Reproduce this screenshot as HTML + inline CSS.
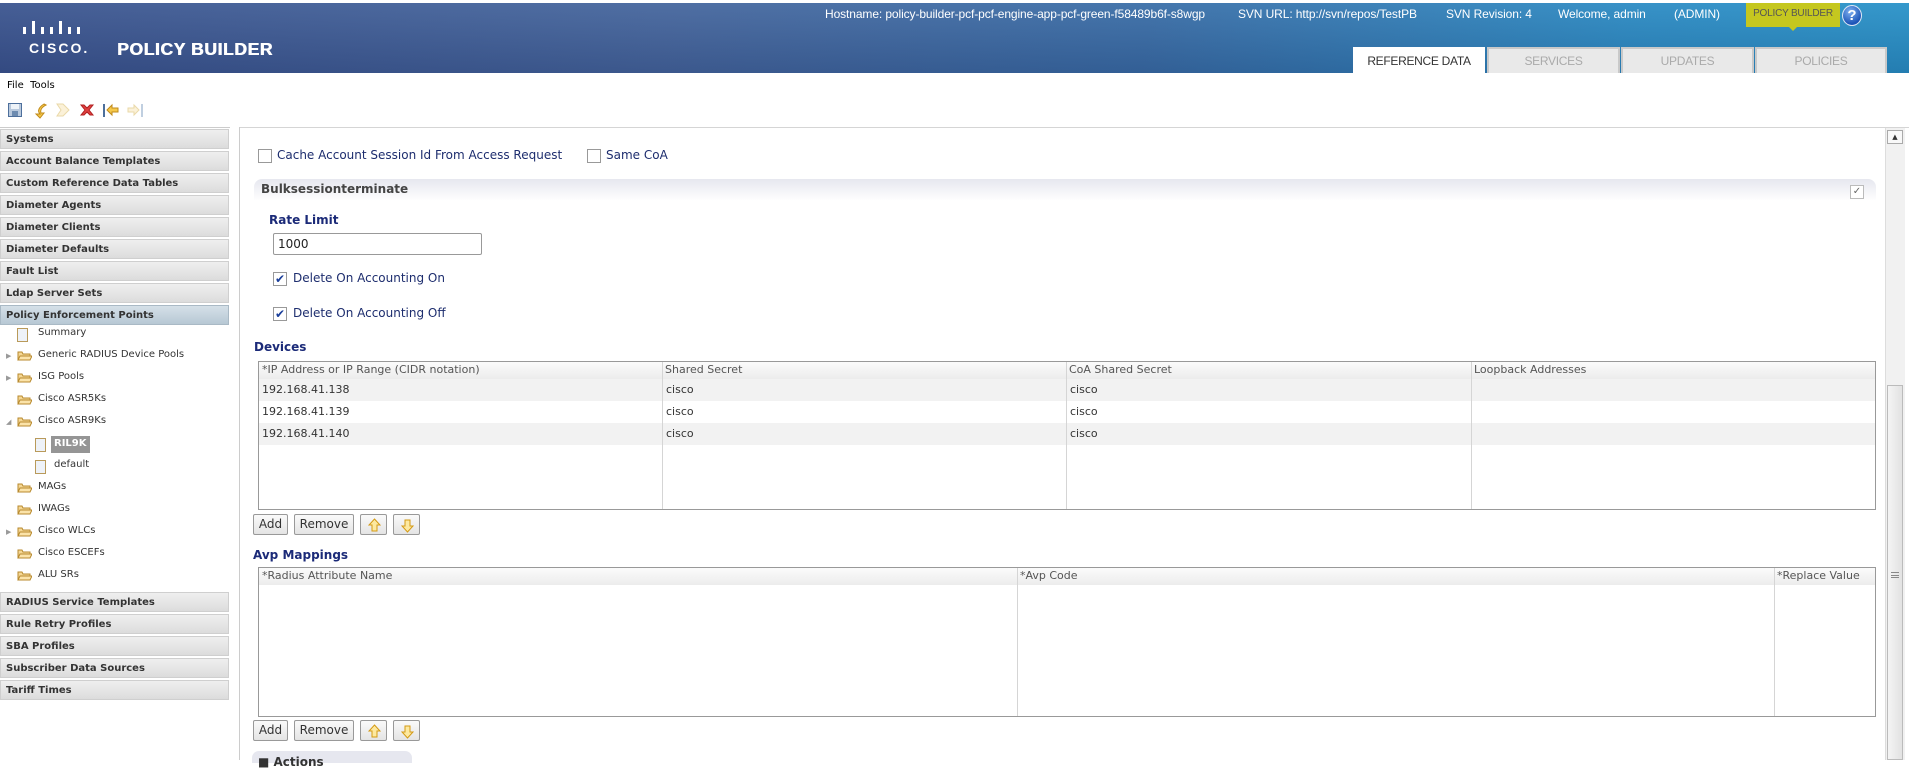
<!DOCTYPE html>
<html><head><meta charset="utf-8">
<style>
*{margin:0;padding:0;box-sizing:border-box}
body{width:1909px;height:760px;overflow:hidden;background:#fff;position:relative;font-family:"DejaVu Sans","Liberation Sans",sans-serif;}
.a{position:absolute;white-space:nowrap}
#hdr{position:absolute;left:0;top:3px;width:1909px;height:70px;background:linear-gradient(100deg,#3c5690 0%,#46679e 35%,#3b6fa8 60%,#2d8cc4 85%,#2a93c9 100%);}
#hdr2{position:absolute;left:0;top:3px;width:1909px;height:70px;background:linear-gradient(180deg,rgba(255,255,255,0.05),rgba(0,0,40,0.15));}
.ht{font-family:"Liberation Sans",sans-serif;font-size:12px;color:#fff;top:7px;letter-spacing:-0.1px}
.tab{position:absolute;top:47px;height:26px;background:#e9e9e9;border:2px solid #c9c9c9;border-bottom:none;font-family:"Liberation Sans",sans-serif;font-size:12px;color:#aaa;text-align:center;line-height:24px;letter-spacing:-0.3px}
.sb{position:absolute;left:0;width:229px;height:20px;background:linear-gradient(#efefef,#dcdcdc);border:1px solid #cfcfcf;font-weight:bold;font-size:10px;color:#333;padding-left:5px;line-height:19px}
.tr{position:absolute;font-size:10px;color:#333;line-height:14px}
.fold{position:absolute;width:15px;height:11px}
.doc{position:absolute;width:11px;height:14px;border:1px solid #b99a5a;background:#eef2f8}
.lbl{font-size:12px;color:#1d2d6e}
.cb{position:absolute;width:14px;height:14px;border:1px solid #999;background:#fff}
.h{font-weight:bold;font-size:12px;color:#1b2a78}
.btn{position:absolute;height:21px;border:1px solid #999;border-radius:2px;background:linear-gradient(#fafafa,#e4e4e4);font-size:12px;color:#333;text-align:center;line-height:19px}
.td{font-size:11px;color:#333}
.ar{position:absolute;left:7px;top:3px}
</style></head><body>
<div id="hdr"></div><div id="hdr2"></div>
<svg class="a" style="left:22px;top:18px" width="76" height="18">
<g fill="#fff">
<rect x="1" y="9" width="3" height="7"/><rect x="10" y="3" width="3" height="13"/><rect x="19" y="9" width="3" height="7"/><rect x="28" y="9" width="3" height="7"/><rect x="37" y="3" width="3" height="13"/><rect x="46" y="9" width="3" height="7"/><rect x="55" y="9" width="3" height="7"/>
</g></svg>
<div class="a" style="left:29px;top:40px;font-family:'Liberation Sans';font-weight:bold;font-size:14px;color:#fff;letter-spacing:2px">CISCO.</div>
<div class="a" style="left:117px;top:39px;font-family:'Liberation Sans';font-weight:bold;font-size:17.5px;color:#fff;letter-spacing:0.6px;text-shadow:0.6px 0 0 #fff">POLICY BUILDER</div>
<div class="a ht" style="left:825px">Hostname: policy-builder-pcf-pcf-engine-app-pcf-green-f58489b6f-s8wgp</div>
<div class="a ht" style="left:1238px">SVN URL: http://svn/repos/TestPB</div>
<div class="a ht" style="left:1446px">SVN Revision: 4</div>
<div class="a ht" style="left:1558px">Welcome, admin</div>
<div class="a ht" style="left:1674px">(ADMIN)</div>
<div class="a" style="left:1746px;top:3px;width:94px;height:24px;background:#c5c71f;font-family:'Liberation Sans';font-size:10px;color:#555;text-align:center;line-height:22px;letter-spacing:-0.2px">POLICY BUILDER</div>
<div class="a" style="left:1789px;top:27px;width:0;height:0;border-left:4px solid transparent;border-right:4px solid transparent;border-top:4px solid #c5c71f"></div>
<div class="a" style="left:1842px;top:5px;width:20px;height:21px;border-radius:50%;background:radial-gradient(circle at 40% 30%,#7fb0f0,#1d55b8 70%);border:1px solid #dfe8f5;color:#fff;font-family:'Liberation Sans';font-weight:bold;font-size:15px;text-align:center;line-height:19px">?</div>
<div class="tab" style="left:1353px;width:132px;background:#fff;border-color:#fff;color:#333">REFERENCE DATA</div>
<div class="tab" style="left:1487px;width:133px">SERVICES</div>
<div class="tab" style="left:1621px;width:133px">UPDATES</div>
<div class="tab" style="left:1755px;width:132px">POLICIES</div>
<div class="a" style="left:7px;top:80px;font-size:10px;color:#000">File&nbsp; Tools</div>
<svg class="a" style="left:6px;top:101px" width="140" height="18">
<rect x="2.5" y="2.5" width="13" height="13" fill="#b9c9dd" stroke="#4d6f9c"/><rect x="5" y="3" width="8" height="5" fill="#eef3f8"/><rect x="6" y="10" width="6" height="5" fill="#6d8bb0"/>
<path d="M38 3 C33 6 31 10 34 13 L30 13 L34 17 L38 12 L35 12 C34 9 36 6 40 4 Z" fill="#f5c84a" stroke="#c08a1a"/>
<path d="M51 3 L57 3 L63 9 L57 15 L51 15 L55 9 Z" fill="#fbf1d8" stroke="#ead9a9"/>
<path d="M75 4 L78 4 L81 7 L84 4 L87 4 L83 9 L87 14 L84 14 L81 11 L78 14 L75 14 L79 9 Z" fill="#e04040" stroke="#b02020"/>
<rect x="97" y="3" width="2" height="13" fill="#4d6f9c"/><path d="M101 9 L106 4 L106 7 L112 7 L112 11 L106 11 L106 14 Z" fill="#f5c84a" stroke="#c08a1a"/>
<rect x="135" y="3" width="2" height="13" fill="#c0cfe0"/><path d="M133 9 L128 4 L128 7 L122 7 L122 11 L128 11 L128 14 Z" fill="#fbf1d8" stroke="#ead9a9"/>
</svg>
<div class="a" style="left:0;top:127px;width:230px;height:1px;background:#ccc"></div>
<div class="sb" style="top:129px">Systems</div>
<div class="sb" style="top:151px">Account Balance Templates</div>
<div class="sb" style="top:173px">Custom Reference Data Tables</div>
<div class="sb" style="top:195px">Diameter Agents</div>
<div class="sb" style="top:217px">Diameter Clients</div>
<div class="sb" style="top:239px">Diameter Defaults</div>
<div class="sb" style="top:261px">Fault List</div>
<div class="sb" style="top:283px">Ldap Server Sets</div>
<div class="sb" style="top:305px;background:linear-gradient(#d5e0e8,#b7c8d4);border-color:#a9b9c5">Policy Enforcement Points</div>
<div class="doc" style="left:17px;top:328px"></div><div class="tr" style="left:38px;top:326px">Summary</div>
<div class="a" style="left:6px;top:352px;font-size:7px;color:#999">&#9654;</div><svg class="fold" style="left:17px;top:350px"><path d="M1 2 L5 2 L6 4 L13 4 L13 10 L1 10 Z" fill="#f5d794" stroke="#b88a2e"/><path d="M1 10 L3 6 L15 6 L13 10 Z" fill="#fbe3a9" stroke="#b88a2e"/></svg><div class="tr" style="left:38px;top:348px">Generic RADIUS Device Pools</div>
<div class="a" style="left:6px;top:374px;font-size:7px;color:#999">&#9654;</div><svg class="fold" style="left:17px;top:372px"><path d="M1 2 L5 2 L6 4 L13 4 L13 10 L1 10 Z" fill="#f5d794" stroke="#b88a2e"/><path d="M1 10 L3 6 L15 6 L13 10 Z" fill="#fbe3a9" stroke="#b88a2e"/></svg><div class="tr" style="left:38px;top:370px">ISG Pools</div>
<svg class="fold" style="left:17px;top:394px"><path d="M1 2 L5 2 L6 4 L13 4 L13 10 L1 10 Z" fill="#f5d794" stroke="#b88a2e"/><path d="M1 10 L3 6 L15 6 L13 10 Z" fill="#fbe3a9" stroke="#b88a2e"/></svg><div class="tr" style="left:38px;top:392px">Cisco ASR5Ks</div>
<div class="a" style="left:6px;top:418px;font-size:7px;color:#999">&#9698;</div><svg class="fold" style="left:17px;top:416px"><path d="M1 2 L5 2 L6 4 L13 4 L13 10 L1 10 Z" fill="#f5d794" stroke="#b88a2e"/><path d="M1 10 L3 6 L15 6 L13 10 Z" fill="#fbe3a9" stroke="#b88a2e"/></svg><div class="tr" style="left:38px;top:414px">Cisco ASR9Ks</div>
<div class="doc" style="left:35px;top:438px"></div><div class="a" style="left:51px;top:436px;width:39px;height:17px;background:#959595;color:#fff;font-weight:bold;font-size:10px;padding:2px 3px">RIL9K</div>
<div class="doc" style="left:35px;top:460px"></div><div class="tr" style="left:54px;top:458px">default</div>
<svg class="fold" style="left:17px;top:482px"><path d="M1 2 L5 2 L6 4 L13 4 L13 10 L1 10 Z" fill="#f5d794" stroke="#b88a2e"/><path d="M1 10 L3 6 L15 6 L13 10 Z" fill="#fbe3a9" stroke="#b88a2e"/></svg><div class="tr" style="left:38px;top:480px">MAGs</div>
<svg class="fold" style="left:17px;top:504px"><path d="M1 2 L5 2 L6 4 L13 4 L13 10 L1 10 Z" fill="#f5d794" stroke="#b88a2e"/><path d="M1 10 L3 6 L15 6 L13 10 Z" fill="#fbe3a9" stroke="#b88a2e"/></svg><div class="tr" style="left:38px;top:502px">IWAGs</div>
<div class="a" style="left:6px;top:528px;font-size:7px;color:#999">&#9654;</div><svg class="fold" style="left:17px;top:526px"><path d="M1 2 L5 2 L6 4 L13 4 L13 10 L1 10 Z" fill="#f5d794" stroke="#b88a2e"/><path d="M1 10 L3 6 L15 6 L13 10 Z" fill="#fbe3a9" stroke="#b88a2e"/></svg><div class="tr" style="left:38px;top:524px">Cisco WLCs</div>
<svg class="fold" style="left:17px;top:548px"><path d="M1 2 L5 2 L6 4 L13 4 L13 10 L1 10 Z" fill="#f5d794" stroke="#b88a2e"/><path d="M1 10 L3 6 L15 6 L13 10 Z" fill="#fbe3a9" stroke="#b88a2e"/></svg><div class="tr" style="left:38px;top:546px">Cisco ESCEFs</div>
<svg class="fold" style="left:17px;top:570px"><path d="M1 2 L5 2 L6 4 L13 4 L13 10 L1 10 Z" fill="#f5d794" stroke="#b88a2e"/><path d="M1 10 L3 6 L15 6 L13 10 Z" fill="#fbe3a9" stroke="#b88a2e"/></svg><div class="tr" style="left:38px;top:568px">ALU SRs</div>
<div class="sb" style="top:592px">RADIUS Service Templates</div>
<div class="sb" style="top:614px">Rule Retry Profiles</div>
<div class="sb" style="top:636px">SBA Profiles</div>
<div class="sb" style="top:658px">Subscriber Data Sources</div>
<div class="sb" style="top:680px">Tariff Times</div>
<div class="a" style="left:239px;top:127px;width:1px;height:633px;background:#ccc"></div>
<div class="a" style="left:240px;top:127px;width:1669px;height:1px;background:#d5d5d5"></div>
<div class="a" style="left:1885px;top:128px;width:20px;height:632px;background:#f1f1f1;border-left:1px solid #ddd"></div>
<div class="a" style="left:1887px;top:130px;width:16px;height:14px;border:1px solid #aaa;background:#f8f8f8;font-size:7px;text-align:center;color:#333;line-height:12px">&#9650;</div>
<div class="a" style="left:1887px;top:385px;width:16px;height:375px;border:1px solid #bbb;background:linear-gradient(90deg,#f4f4f4,#e2e2e2);"></div>
<div class="a" style="left:1891px;top:572px;width:8px;height:6px;border-top:1px solid #888;border-bottom:1px solid #888"></div><div class="a" style="left:1891px;top:575px;width:8px;height:1px;background:#888"></div>
<div class="cb" style="left:258px;top:149px"></div><div class="a lbl" style="left:277px;top:148px">Cache Account Session Id From Access Request</div>
<div class="cb" style="left:587px;top:149px"></div><div class="a lbl" style="left:606px;top:148px">Same CoA</div>
<div class="a" style="left:254px;top:179px;width:1622px;height:22px;border-radius:8px 8px 0 0;background:linear-gradient(#e6e7ef,#fff)"></div>
<div class="a" style="left:261px;top:182px;font-weight:bold;font-size:12px;color:#444">Bulksessionterminate</div>
<div class="a" style="left:1850px;top:185px;width:14px;height:14px;border:1px solid #bbb;background:#fff;font-size:10px;color:#666;text-align:center;line-height:12px">&#10003;</div>
<div class="a h" style="left:269px;top:213px">Rate Limit</div>
<div class="a" style="left:273px;top:233px;width:209px;height:22px;border:1px solid #999;border-radius:2px;font-size:12px;color:#222;padding:3px 4px">1000</div>
<div class="cb" style="left:273px;top:272px;font-size:12px;color:#1a3e9a;text-align:center;line-height:12px;font-weight:bold">&#10004;</div><div class="a lbl" style="left:293px;top:271px">Delete On Accounting On</div>
<div class="cb" style="left:273px;top:307px;font-size:12px;color:#1a3e9a;text-align:center;line-height:12px;font-weight:bold">&#10004;</div><div class="a lbl" style="left:293px;top:306px">Delete On Accounting Off</div>
<div class="a h" style="left:254px;top:340px">Devices</div>
<div class="a" style="left:258px;top:361px;width:1618px;height:149px;border:1px solid #999"></div>
<div class="a" style="left:259px;top:362px;width:1616px;height:17px;background:linear-gradient(#fbfbfb,#ececec)"></div>
<div class="a" style="left:259px;top:379px;width:1616px;height:22px;background:#f2f2f2"></div>
<div class="a" style="left:259px;top:423px;width:1616px;height:22px;background:#f2f2f2"></div>
<div class="a" style="left:662px;top:362px;width:1px;height:147px;background:#d5d5d5"></div>
<div class="a" style="left:1066px;top:362px;width:1px;height:147px;background:#d5d5d5"></div>
<div class="a" style="left:1471px;top:362px;width:1px;height:147px;background:#d5d5d5"></div>
<div class="a td" style="left:262px;top:363px;color:#555">*IP Address or IP Range (CIDR notation)</div>
<div class="a td" style="left:665px;top:363px;color:#555">Shared Secret</div>
<div class="a td" style="left:1069px;top:363px;color:#555">CoA Shared Secret</div>
<div class="a td" style="left:1474px;top:363px;color:#555">Loopback Addresses</div>
<div class="a td" style="left:262px;top:383px">192.168.41.138</div><div class="a td" style="left:666px;top:383px">cisco</div><div class="a td" style="left:1070px;top:383px">cisco</div>
<div class="a td" style="left:262px;top:405px">192.168.41.139</div><div class="a td" style="left:666px;top:405px">cisco</div><div class="a td" style="left:1070px;top:405px">cisco</div>
<div class="a td" style="left:262px;top:427px">192.168.41.140</div><div class="a td" style="left:666px;top:427px">cisco</div><div class="a td" style="left:1070px;top:427px">cisco</div>
<div class="btn" style="left:253px;top:514px;width:35px">Add</div>
<div class="btn" style="left:294px;top:514px;width:60px">Remove</div>
<div class="btn" style="left:360px;top:514px;width:27px"><svg class="ar" width="13" height="15"><path d="M6.5 1 L12 7 L9 7 L9 13 L4 13 L4 7 L1 7 Z" fill="#fde9a0" stroke="#d49a14"/></svg></div>
<div class="btn" style="left:393px;top:514px;width:27px"><svg class="ar" width="13" height="15"><path d="M6.5 14 L12 8 L9 8 L9 2 L4 2 L4 8 L1 8 Z" fill="#fde9a0" stroke="#d49a14"/></svg></div>
<div class="a h" style="left:253px;top:548px">Avp Mappings</div>
<div class="a" style="left:258px;top:567px;width:1618px;height:150px;border:1px solid #999"></div>
<div class="a" style="left:259px;top:568px;width:1616px;height:17px;background:linear-gradient(#fbfbfb,#ececec)"></div>
<div class="a" style="left:1017px;top:568px;width:1px;height:148px;background:#d5d5d5"></div>
<div class="a" style="left:1774px;top:568px;width:1px;height:148px;background:#d5d5d5"></div>
<div class="a td" style="left:262px;top:569px;color:#555">*Radius Attribute Name</div>
<div class="a td" style="left:1020px;top:569px;color:#555">*Avp Code</div>
<div class="a td" style="left:1777px;top:569px;color:#555">*Replace Value</div>
<div class="btn" style="left:253px;top:720px;width:35px">Add</div>
<div class="btn" style="left:294px;top:720px;width:60px">Remove</div>
<div class="btn" style="left:360px;top:720px;width:27px"><svg class="ar" width="13" height="15"><path d="M6.5 1 L12 7 L9 7 L9 13 L4 13 L4 7 L1 7 Z" fill="#fde9a0" stroke="#d49a14"/></svg></div>
<div class="btn" style="left:393px;top:720px;width:27px"><svg class="ar" width="13" height="15"><path d="M6.5 14 L12 8 L9 8 L9 2 L4 2 L4 8 L1 8 Z" fill="#fde9a0" stroke="#d49a14"/></svg></div>
<div class="a" style="left:252px;top:751px;width:160px;height:12px;border-radius:7px 7px 0 0;background:#e6e7ef"></div>
<div class="a" style="left:258px;top:755px;font-weight:bold;font-size:12px;color:#333">&#9632; Actions</div>
</body></html>
